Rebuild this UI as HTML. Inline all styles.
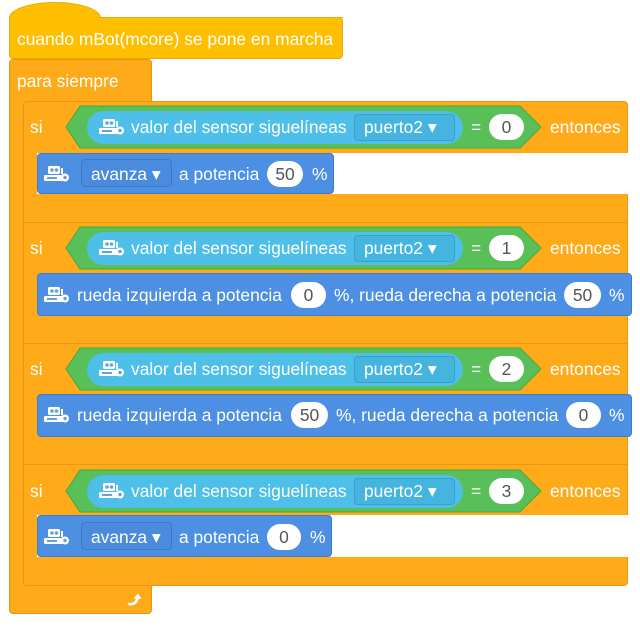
<!DOCTYPE html>
<html><head><meta charset="utf-8"><style>
body{margin:0;width:640px;height:622px;background:#fff;position:relative;overflow:hidden;font-family:"Liberation Sans",sans-serif;font-size:17.4px;color:#fff}
div,span{position:absolute;box-sizing:border-box}
.t{white-space:nowrap;line-height:20px}
.or{background:#FFAB19;border:1px solid #E8961A}
.blue{background:#4C8FE3;border:1px solid #3F7CCB;border-radius:4px}
.cy{background:#4DBFE8;border-radius:17px}
.dd{border:1px solid #3D9FC8;background:#45B5DF;border-radius:4px}
.ddb{border:1px solid #3B78C6;background:#4A8BDD;border-radius:4px}
.ov{background:#fff;border-radius:14px;color:#555;text-align:center;line-height:26px;height:26px}
</style></head><body>
<!-- hat -->
<div style="left:9px;top:2px;width:92px;height:32px;background:#FFBF00;border-radius:50%;border:1px solid #E6AC00"></div>
<div style="left:9px;top:17px;width:334px;height:42px;background:#FFBF00;border:1px solid #E6AC00;border-top:none;border-radius:0 4px 4px 4px"></div>
<div style="left:100px;top:17px;width:243px;height:1px;background:#E6AC00"></div>
<span class="t" style="left:17px;top:29px">cuando mBot(mcore) se pone en marcha</span>
<!-- forever -->
<div class="or" style="left:9px;top:59px;width:143px;height:555px;border-radius:4px"></div>
<span class="t" style="left:17px;top:71px">para siempre</span>
<svg style="position:absolute;left:126px;top:591px" width="18" height="18" viewBox="0 0 18 18"><path d="M3 13 Q10 14 11.5 7" stroke="#fff" stroke-width="2.6" fill="none" stroke-linecap="round"/><path d="M7.5 7.5 L12 2.5 L15.5 8 Z" fill="#fff"/></svg>

<!-- if blocks -->
<div class="or" style="left:23px;top:101px;width:605px;height:485px;border-radius:4px"></div>
<div style="left:37px;top:153px;width:592px;height:41px;background:#fff"></div>
<div style="left:23px;top:222px;width:605px;height:1px;background:#E8961A"></div>
<div style="left:23px;top:343px;width:605px;height:1px;background:#E8961A"></div>
<div style="left:23px;top:464px;width:605px;height:1px;background:#E8961A"></div>
<div style="left:37px;top:515px;width:592px;height:42px;background:#fff"></div>
<div style="left:153px;top:586px;width:480px;height:40px;background:#fff"></div>

<svg style="position:absolute;left:0;top:0" width="640" height="622">
<defs><g id="cond"><polygon points="66,0 80,-21 520,-21 541,0 520,21 80,21" fill="#59C059" stroke="#44A844" stroke-width="1"/></g></defs>
<use href="#cond" y="127"/><use href="#cond" y="248"/><use href="#cond" y="369"/><use href="#cond" y="491"/>
</svg>

<span class="t" style="left:30px;top:117px">si</span>
<div class="cy" style="left:87px;top:111px;width:376px;height:33px"></div>
<div class="dd" style="left:354px;top:114px;width:101px;height:27px"></div>
<span class="t" style="left:131px;top:117px">valor del sensor siguelíneas</span>
<span class="t" style="left:364px;top:117px">puerto2 ▾</span>
<span class="t" style="left:471px;top:117px">=</span>
<div class="ov" style="left:489px;top:114px;width:35px">0</div>
<span class="t" style="left:550px;top:117px">entonces</span>

<span class="t" style="left:30px;top:238px">si</span>
<div class="cy" style="left:87px;top:232px;width:376px;height:33px"></div>
<div class="dd" style="left:354px;top:235px;width:101px;height:27px"></div>
<span class="t" style="left:131px;top:238px">valor del sensor siguelíneas</span>
<span class="t" style="left:364px;top:238px">puerto2 ▾</span>
<span class="t" style="left:471px;top:238px">=</span>
<div class="ov" style="left:489px;top:235px;width:35px">1</div>
<span class="t" style="left:550px;top:238px">entonces</span>

<span class="t" style="left:30px;top:359px">si</span>
<div class="cy" style="left:87px;top:353px;width:376px;height:33px"></div>
<div class="dd" style="left:354px;top:356px;width:101px;height:27px"></div>
<span class="t" style="left:131px;top:359px">valor del sensor siguelíneas</span>
<span class="t" style="left:364px;top:359px">puerto2 ▾</span>
<span class="t" style="left:471px;top:359px">=</span>
<div class="ov" style="left:489px;top:356px;width:35px">2</div>
<span class="t" style="left:550px;top:359px">entonces</span>

<span class="t" style="left:30px;top:481px">si</span>
<div class="cy" style="left:87px;top:475px;width:376px;height:33px"></div>
<div class="dd" style="left:354px;top:478px;width:101px;height:27px"></div>
<span class="t" style="left:131px;top:481px">valor del sensor siguelíneas</span>
<span class="t" style="left:364px;top:481px">puerto2 ▾</span>
<span class="t" style="left:471px;top:481px">=</span>
<div class="ov" style="left:489px;top:478px;width:35px">3</div>
<span class="t" style="left:550px;top:481px">entonces</span>

<div class="blue" style="left:37px;top:153px;width:297px;height:41px"></div>
<div class="ddb" style="left:81px;top:159px;width:91px;height:28px"></div>
<span class="t" style="left:91px;top:164px">avanza ▾</span>
<span class="t" style="left:179px;top:164px">a potencia</span>
<div class="ov" style="left:267px;top:161px;width:36px">50</div>
<span class="t" style="left:312px;top:164px">%</span>

<div class="blue" style="left:37px;top:273px;width:595px;height:43px"></div>
<span class="t" style="left:77px;top:285px">rueda izquierda a potencia</span>
<div class="ov" style="left:291px;top:282px;width:35px">0</div>
<span class="t" style="left:334px;top:285px">%, rueda derecha a potencia</span>
<div class="ov" style="left:564px;top:282px;width:37px">50</div>
<span class="t" style="left:609px;top:285px">%</span>

<div class="blue" style="left:37px;top:394px;width:595px;height:43px"></div>
<span class="t" style="left:77px;top:405px">rueda izquierda a potencia</span>
<div class="ov" style="left:291px;top:402px;width:37px">50</div>
<span class="t" style="left:336px;top:405px">%, rueda derecha a potencia</span>
<div class="ov" style="left:566px;top:402px;width:35px">0</div>
<span class="t" style="left:609px;top:405px">%</span>

<div class="blue" style="left:37px;top:515px;width:295px;height:42px"></div>
<div class="ddb" style="left:81px;top:522px;width:91px;height:28px"></div>
<span class="t" style="left:91px;top:527px">avanza ▾</span>
<span class="t" style="left:179px;top:527px">a potencia</span>
<div class="ov" style="left:267px;top:524px;width:34px">0</div>
<span class="t" style="left:310px;top:527px">%</span>

<svg style="position:absolute;left:0;top:0" width="640" height="622">
<defs><g id="rb" fill="#fff"><rect x="4" y="0" width="12" height="8" rx="1.5"/><circle cx="8" cy="4" r="1.8" fill="#6aa0d8"/><circle cx="12.5" cy="4" r="1.8" fill="#6aa0d8"/><rect x="0" y="9" width="19" height="6" rx="1"/><rect x="3" y="11" width="10" height="2" fill="#6aa0d8"/><circle cx="21" cy="11.5" r="4"/><circle cx="21" cy="11.5" r="1.7" fill="#6aa0d8"/><rect x="17" y="2" width="2" height="6"/></g></defs>
<use href="#rb" x="99" y="119"/><use href="#rb" x="99" y="240"/><use href="#rb" x="99" y="361"/><use href="#rb" x="99" y="483"/>
<use href="#rb" x="44" y="166"/><use href="#rb" x="44" y="287"/><use href="#rb" x="44" y="407"/><use href="#rb" x="44" y="529"/>
</svg>
</body></html>
